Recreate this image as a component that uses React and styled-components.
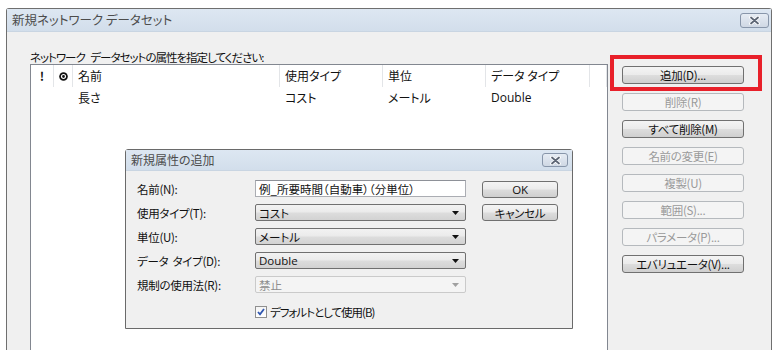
import React from "react"
import styled, { createGlobalStyle } from "styled-components"

const GlobalStyle = createGlobalStyle`
  * { box-sizing: border-box; }
  body {
    margin: 0;
    background: #fff;
    font-family: "Noto Sans CJK JP", "Noto Sans", sans-serif;
    font-size: 12px;
    color: #111;
    font-feature-settings: "palt";
  }
`

const Page = styled.div`
  position: relative;
  width: 778px;
  height: 350px;
  overflow: hidden;
  padding: 8px 0 0 6px;
`

const Window = styled.div`
  width: 766px;
  height: 360px;
  border: 1px solid #6f6f6f;
  border-bottom: none;
  border-radius: 3px 3px 0 0;
  background: #f0f0f0;
  display: flex;
  flex-direction: column;
`

const TitleBar = styled.div`
  height: ${p => p.$h}px;
  flex: none;
  display: flex;
  align-items: center;
  justify-content: space-between;
  padding: 0 ${p => p.$pr}px 0 5px;
  background: linear-gradient(#dde7f2, #d2deeb);
  border-bottom: 1px solid #c9d5e2;
  color: #4c4c4c;
  font-size: ${p => p.$fs}px;
  line-height: 16px;
`

const CloseBox = styled.div`
  width: ${p => p.$w}px;
  height: ${p => p.$h}px;
  border: 1px solid #8896aa;
  border-radius: 3px;
  background: linear-gradient(#e6ecf4, #cfd8e4);
  display: flex;
  align-items: center;
  justify-content: center;
  svg {
    width: 11px;
    height: 9px;
  }
`

const Body = styled.div`
  flex: 1;
  display: flex;
`

const LeftCol = styled.div`
  margin-left: 23px;
  padding-top: 18px;
  width: 578px;
  display: flex;
  flex-direction: column;
`

const Caption = styled.div`
  font-size: 11.5px;
  line-height: 14px;
  height: 14px;
  letter-spacing: -1px;
  word-spacing: 4px;
`

const ListBox = styled.div`
  flex: 1;
  background: #fff;
  border: 1px solid #828790;
`

const ListRow = styled.div`
  display: grid;
  grid-template-columns: 23px 19px 207px 103px 103px 104px 1fr;
  height: 22px;
  align-items: stretch;
`

const Cell = styled.div`
  display: flex;
  align-items: center;
  padding-left: ${p => (p.$center ? 0 : 5)}px;
  justify-content: ${p => (p.$center ? "center" : "flex-start")};
  border-right: ${p => (p.$head ? "1px solid #e3e5e8" : "none")};
  line-height: 16px;
  font-weight: ${p => (p.$bold ? 700 : 400)};
  font-family: ${p => (p.$latin ? '"Open Sans", "Noto Sans", sans-serif' : "inherit")};
`

const RightCol = styled.div`
  margin-left: 14px;
  padding-top: 34px;
  display: flex;
  flex-direction: column;
  gap: 9px;
`

const Button = styled.div`
  width: ${p => p.$w}px;
  height: ${p => p.$h}px;
  border: 1px solid ${p => (p.$disabled ? "#b5b9bd" : "#707070")};
  border-radius: 3px;
  background: ${p =>
    p.$disabled
      ? "#f4f4f4"
      : "linear-gradient(#f4f4f4 0%, #ebebeb 48%, #dddddd 52%, #cfcfcf 100%)"};
  color: ${p => (p.$disabled ? "#9a9a9a" : "#111")};
  display: flex;
  align-items: center;
  justify-content: center;
  font-size: 11.5px;
  line-height: 14px;
  letter-spacing: -0.3px;
`

const RedFrame = styled.div`
  position: absolute;
  left: 610px;
  top: 55px;
  width: 152px;
  height: 36px;
  border: 4px solid #e8202a;
`

const Dialog = styled.div`
  position: absolute;
  left: 125px;
  top: 149px;
  width: 448px;
  height: 180px;
  border: 1px solid #6a6a6a;
  border-radius: 3px 3px 0 0;
  background: #f0f0f0;
  display: flex;
  flex-direction: column;
`

const DialogBody = styled.div`
  display: flex;
  padding: 9px 0 0 11px;
`

const Form = styled.div`
  display: grid;
  grid-template-columns: 118px 211px;
  grid-auto-rows: 17px;
  row-gap: 7px;
  align-items: center;
`

const Label = styled.div`
  line-height: 16px;
  font-size: 11.5px;
  letter-spacing: -0.3px;
  word-spacing: 2px;
`

const TextInput = styled.div`
  height: 17px;
  background: #fff;
  border: 1px solid #abadb3;
  border-top-color: #8e9198;
  padding-left: 3px;
  display: flex;
  align-items: center;
  font-size: 11.5px;
  line-height: 14px;
`

const Select = styled.div`
  height: 17px;
  border: 1px solid ${p => (p.$disabled ? "#cacaca" : "#707070")};
  border-radius: 2px;
  background: ${p =>
    p.$disabled ? "#f4f4f4" : "linear-gradient(#f2f2f2 0%, #ebebeb 45%, #dcdcdc 55%, #d2d2d2 100%)"};
  color: ${p => (p.$disabled ? "#8d8d8d" : "#111")};
  display: flex;
  align-items: center;
  justify-content: space-between;
  padding: 0 6px 0 3px;
  font-size: 11.5px;
  line-height: 14px;
  svg {
    width: 7px;
    height: 4px;
    fill: ${p => (p.$disabled ? "#a0a0a0" : "#111")};
  }
`

const CheckRow = styled.div`
  grid-column: 2;
  display: flex;
  align-items: center;
  gap: 3px;
  padding-top: 6px;
  font-size: 11.5px;
  line-height: 14px;
  letter-spacing: -1px;
`

const CheckBox = styled.div`
  width: 12px;
  height: 12px;
  border: 1px solid #8f8f8f;
  background: linear-gradient(#f4f4f4, #fff);
  display: flex;
  align-items: center;
  justify-content: center;
  svg {
    width: 8px;
    height: 8px;
  }
`

const DialogButtons = styled.div`
  margin-left: 16px;
  padding-top: 1px;
  display: flex;
  flex-direction: column;
  gap: 6px;
`

const Latin = styled.span`
  font-family: "Open Sans", "Noto Sans", sans-serif;
`

const CloseIcon = () => (
  <svg viewBox="0 0 11 9">
    <path d="M2 1.5 L9 7.5 M9 1.5 L2 7.5" stroke="#fff" strokeWidth="3.6" strokeLinecap="round" />
    <path d="M2 1.5 L9 7.5 M9 1.5 L2 7.5" stroke="#5d6675" strokeWidth="1.8" strokeLinecap="round" />
  </svg>
)

const Arrow = () => (
  <svg viewBox="0 0 7 4">
    <path d="M0 0 H7 L3.5 4 Z" />
  </svg>
)

const StatusIcon = () => (
  <svg width="9" height="9" viewBox="0 0 9 9">
    <circle cx="4.5" cy="4.5" r="4.3" fill="#111" />
    <circle cx="4.5" cy="4.5" r="2" fill="none" stroke="#fff" strokeWidth="1.2" />
  </svg>
)

const sideButtons = [
  { label: "追加(D)...", disabled: false },
  { label: "削除(R)", disabled: true },
  { label: "すべて削除(M)", disabled: false },
  { label: "名前の変更(E)", disabled: true },
  { label: "複製(U)", disabled: true },
  { label: "範囲(S)...", disabled: true },
  { label: "パラメータ(P)...", disabled: true },
  { label: "エバリュエータ(V)...", disabled: false },
]

const fields = [
  { label: "使用タイプ(T):", value: "コスト" },
  { label: "単位(U):", value: "メートル" },
  { label: "データ タイプ(D):", value: <Latin>Double</Latin> },
  { label: "規制の使用法(R):", value: "禁止", disabled: true },
]

const App = () => (
  <Page>
    <GlobalStyle />
    <Window>
      <TitleBar $h={23} $pr={2} $fs={12.5}>
        <span>新規ネットワーク データセット</span>
        <CloseBox $w={29} $h={15}>
          <CloseIcon />
        </CloseBox>
      </TitleBar>
      <Body>
        <LeftCol>
          <Caption>ネットワーク データセットの属性を指定してください:</Caption>
          <ListBox>
            <ListRow>
              <Cell $head $center $bold>!</Cell>
              <Cell $head $center><StatusIcon /></Cell>
              <Cell $head>名前</Cell>
              <Cell $head>使用タイプ</Cell>
              <Cell $head>単位</Cell>
              <Cell $head>データ タイプ</Cell>
              <Cell $head />
            </ListRow>
            <ListRow>
              <Cell />
              <Cell />
              <Cell>長さ</Cell>
              <Cell>コスト</Cell>
              <Cell>メートル</Cell>
              <Cell $latin>Double</Cell>
              <Cell />
            </ListRow>
          </ListBox>
        </LeftCol>
        <RightCol>
          {sideButtons.map(b => (
            <Button key={b.label} $w={122} $h={18} $disabled={b.disabled}>
              {b.label}
            </Button>
          ))}
        </RightCol>
      </Body>
    </Window>

    <RedFrame />

    <Dialog>
      <TitleBar $h={21} $pr={4} $fs={12}>
        <span>新規属性の追加</span>
        <CloseBox $w={26} $h={14}>
          <CloseIcon />
        </CloseBox>
      </TitleBar>
      <DialogBody>
        <Form>
          <Label>名前(N):</Label>
          <TextInput>例_所要時間（自動車）（分単位）</TextInput>
          {fields.map(f => (
            <React.Fragment key={f.label}>
              <Label>{f.label}</Label>
              <Select $disabled={f.disabled}>
                <span>{f.value}</span>
                <Arrow />
              </Select>
            </React.Fragment>
          ))}
          <CheckRow>
            <CheckBox>
              <svg viewBox="0 0 8 8">
                <path d="M1 4 L3 6.3 L7 1" fill="none" stroke="#2f56b0" strokeWidth="1.8" />
              </svg>
            </CheckBox>
            デフォルトとして使用(B)
          </CheckRow>
        </Form>
        <DialogButtons>
          <Button $w={76} $h={17}>
            <Latin>OK</Latin>
          </Button>
          <Button $w={76} $h={17}>キャンセル</Button>
        </DialogButtons>
      </DialogBody>
    </Dialog>
  </Page>
)

export default App
